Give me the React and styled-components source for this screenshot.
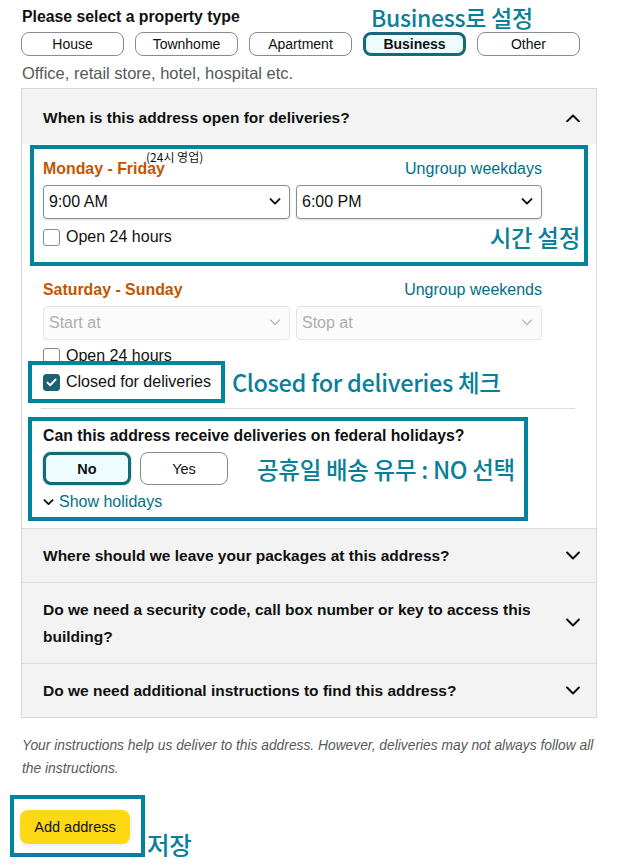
import React from "react";
import styled, { createGlobalStyle } from "styled-components";

const TEAL = "#00849e";
const NOTE = "#0a7f98";
const SELECTED = "#17697a";

const GlobalStyle = createGlobalStyle`
  body {
    margin: 0;
    background: #fff;
    font-family: "Liberation Sans", Arial, sans-serif;
    color: #0f1111;
  }
`;

const Page = styled.div`
  width: 630px;
  box-sizing: border-box;
  padding-left: 21px;
`;

const TitleRow = styled.div`
  display: flex;
  align-items: center;
  height: 30px;
  margin-top: 2px;
`;

const Title = styled.div`
  width: 349px;
  flex: none;
  font-size: 15.8px;
  font-weight: bold;
  padding-left: 1px;
`;

const Note = styled.span`
  font-family: "Noto Sans CJK KR", sans-serif;
  font-size: ${(p) => p.$size || 23.5}px;
  font-weight: 500;
  color: ${NOTE};
  line-height: 26px;
  white-space: nowrap;
  letter-spacing: -0.3px;
`;

const PillRow = styled.div`
  display: flex;
  gap: 11px;
`;

const Pill = styled.div`
  width: 103px;
  height: 24px;
  box-sizing: border-box;
  border-radius: 8px;
  border: ${(p) => (p.$active ? `3px solid ${SELECTED}` : "1px solid #888c8c")};
  background: ${(p) => (p.$active ? "#edfdff" : "#fff")};
  font-weight: ${(p) => (p.$active ? "bold" : "normal")};
  font-size: 14px;
  display: flex;
  align-items: center;
  justify-content: center;
  color: #0f1111;
`;

const Hint = styled.div`
  margin-top: 7px;
  font-size: 16.5px;
  line-height: 20px;
  color: #565959;
  padding-left: 1px;
`;

const Panel = styled.div`
  margin-top: 5px;
  width: 576px;
  box-sizing: border-box;
  border: 1px solid #d5d9d9;
`;

const SectionHeader = styled.div`
  display: flex;
  align-items: center;
  justify-content: space-between;
  background: #f3f3f3;
  padding: ${(p) => (p.$first ? "15px 15px 13px 21px" : "13px 15px 13px 21px")};
  border-top: ${(p) => (p.$first ? "none" : "1px solid #dcdede")};
  font-size: 15.5px;
  font-weight: bold;
  line-height: 27px;
`;

const SectionText = styled.div`
  max-width: 505px;
`;

const Body = styled.div`
  padding: 1px 21px 7px 21px;
  background: #fff;
`;

const AnnotBox = styled.div`
  position: relative;
  box-sizing: border-box;
  border: 4px solid ${TEAL};
  background: #fff;
`;

const HoursBox = styled(AnnotBox)`
  margin-left: -13px;
  width: 558px;
  padding: 9px 4px 12px 9px;
`;

const DayHeader = styled.div`
  position: relative;
  width: 499px;
  display: flex;
  justify-content: space-between;
  line-height: 22px;
  font-size: 16px;
`;

const DayLabel = styled.span`
  color: #c45500;
  font-weight: bold;
  font-size: 15.9px;
`;

const LinkText = styled.span`
  color: #007185;
`;

const Tag = styled.span`
  position: absolute;
  left: 103px;
  top: -8px;
  font-family: "Noto Sans CJK KR", sans-serif;
  font-size: 12px;
  line-height: 14px;
  color: #111;
`;

const SelectRow = styled.div`
  display: grid;
  grid-template-columns: 247px 246px;
  gap: 6px;
  width: 499px;
  margin-top: 5px;
`;

const Select = styled.div`
  height: 34px;
  box-sizing: border-box;
  border: 1px solid ${(p) => (p.$disabled ? "#e3e6e6" : "#888c8c")};
  border-radius: 4px;
  background: ${(p) => (p.$disabled ? "#fbfbfb" : "#fff")};
  box-shadow: ${(p) => (p.$disabled ? "none" : "0 1px 2px rgba(15,17,17,0.15)")};
  color: ${(p) => (p.$disabled ? "#aab0b0" : "#0f1111")};
  display: flex;
  align-items: center;
  justify-content: space-between;
  padding: 0 8px 0 5px;
  font-size: 16px;
`;

const CheckRow = styled.div`
  display: flex;
  align-items: center;
  gap: 6px;
  font-size: 16px;
  line-height: 20px;
`;

const LastRow = styled.div`
  display: flex;
  align-items: center;
  justify-content: space-between;
  margin-top: 5px;
  height: 26px;
`;

const Box = styled.span`
  width: 17px;
  height: 17px;
  flex: none;
  box-sizing: border-box;
  border: 1px solid ${(p) => (p.$checked ? "#1d6270" : "#888c8c")};
  border-radius: 3px;
  background: ${(p) => (p.$checked ? "#1d6270" : "#fff")};
  display: flex;
  align-items: center;
  justify-content: center;
`;

const Weekend = styled.div`
  margin-top: 13px;
`;

const WeekendCheck = styled(CheckRow)`
  margin-top: 6px;
`;

const ClosedRow = styled.div`
  position: relative;
  display: flex;
  align-items: center;
  gap: 7px;
  margin: -5px 0 0 -15px;
`;

const ClosedBox = styled(AnnotBox)`
  padding: 7px 10px 7px 11px;
`;

const Divider = styled.div`
  height: 1px;
  width: 534px;
  background: #dcdede;
  margin: 5px 0 0 -2px;
`;

const HolidayBox = styled(AnnotBox)`
  margin: 8px 0 0 -15px;
  width: 500px;
  padding: 5px 8px 5px 11px;
`;

const Question = styled.div`
  font-size: 15.8px;
  font-weight: bold;
  line-height: 20px;
`;

const ToggleRow = styled.div`
  display: flex;
  align-items: center;
  gap: 9px;
  margin-top: 6px;
`;

const Toggle = styled.div`
  width: 88px;
  height: 33px;
  box-sizing: border-box;
  border-radius: 8px;
  border: ${(p) => (p.$active ? `3px solid ${SELECTED}` : "1px solid #888c8c")};
  background: ${(p) => (p.$active ? "#edfdff" : "#fff")};
  font-weight: ${(p) => (p.$active ? "bold" : "normal")};
  font-size: 14.5px;
  display: flex;
  align-items: center;
  justify-content: center;
  box-shadow: ${(p) => (p.$active ? "0 0 2px rgba(11,110,130,0.6)" : "none")};
`;

const ToggleNote = styled(Note)`
  margin-left: 20px;
`;

const ShowRow = styled.div`
  display: flex;
  align-items: center;
  gap: 5px;
  margin-top: 7px;
  font-size: 16px;
  line-height: 20px;
  color: #007185;
`;

const FinePrint = styled.div`
  margin-top: 16px;
  width: 580px;
  font-size: 13.8px;
  font-style: italic;
  line-height: 23px;
  color: #565959;
  padding-left: 1px;
`;

const SaveRow = styled.div`
  display: flex;
  align-items: flex-end;
  margin: 15px 0 0 -11px;
`;

const SaveBox = styled(AnnotBox)`
  padding: 11px 11px 9px 6px;
`;

const AddButton = styled.div`
  width: 110px;
  height: 34px;
  border-radius: 8px;
  background: #ffd814;
  box-shadow: 0 2px 5px rgba(213, 217, 217, 0.5);
  font-size: 14.5px;
  display: flex;
  align-items: center;
  justify-content: center;
`;

const SaveNote = styled(Note)`
  font-size: 24.5px;
  margin-left: 2px;
  line-height: 24px;
`;

const Chevron = ({ up, size = 16, color = "#0f1111", stroke = 2 }) => (
  <svg width={size} height={size * 0.62} viewBox="0 0 16 10" fill="none">
    <path
      d={up ? "M2 8.5 L8 2.5 L14 8.5" : "M2 1.5 L8 7.5 L14 1.5"}
      stroke={color}
      strokeWidth={stroke}
      strokeLinecap="round"
      strokeLinejoin="round"
    />
  </svg>
);

const Check = ({ checked }) => (
  <Box $checked={checked}>
    {checked && (
      <svg width="11" height="9" viewBox="0 0 11 9" fill="none">
        <path d="M1.5 4.6 L4.2 7.2 L9.5 1.6" stroke="#fff" strokeWidth="2" strokeLinecap="round" strokeLinejoin="round" />
      </svg>
    )}
  </Box>
);

const Dropdown = ({ value, disabled }) => (
  <Select $disabled={disabled}>
    <span>{value}</span>
    <Chevron size={12} stroke={disabled ? 1.6 : 2.6} color={disabled ? "#aab0b0" : "#0f1111"} />
  </Select>
);

const types = ["House", "Townhome", "Apartment", "Business", "Other"];

const collapsed = [
  "Where should we leave your packages at this address?",
  "Do we need a security code, call box number or key to access this building?",
  "Do we need additional instructions to find this address?",
];

const App = () => {
  return (
    <Page>
      <GlobalStyle />
      <TitleRow>
        <Title>Please select a property type</Title>
        <Note $size={23}>Business로 설정</Note>
      </TitleRow>
      <PillRow>
        {types.map((t) => (
          <Pill key={t} $active={t === "Business"}>
            {t}
          </Pill>
        ))}
      </PillRow>
      <Hint>Office, retail store, hotel, hospital etc.</Hint>

      <Panel>
        <SectionHeader $first>
          <SectionText>When is this address open for deliveries?</SectionText>
          <Chevron up />
        </SectionHeader>
        <Body>
          <HoursBox>
            <DayHeader>
              <DayLabel>Monday - Friday</DayLabel>
              <Tag>(24시 영업)</Tag>
              <LinkText>Ungroup weekdays</LinkText>
            </DayHeader>
            <SelectRow>
              <Dropdown value="9:00 AM" />
              <Dropdown value="6:00 PM" />
            </SelectRow>
            <LastRow>
              <CheckRow>
                <Check />
                <span>Open 24 hours</span>
              </CheckRow>
              <Note>시간 설정</Note>
            </LastRow>
          </HoursBox>

          <Weekend>
            <DayHeader>
              <DayLabel>Saturday - Sunday</DayLabel>
              <LinkText>Ungroup weekends</LinkText>
            </DayHeader>
            <SelectRow>
              <Dropdown value="Start at" disabled />
              <Dropdown value="Stop at" disabled />
            </SelectRow>
            <WeekendCheck>
              <Check />
              <span>Open 24 hours</span>
            </WeekendCheck>
          </Weekend>

          <ClosedRow>
            <ClosedBox>
              <CheckRow>
                <Check checked />
                <span>Closed for deliveries</span>
              </CheckRow>
            </ClosedBox>
            <Note>Closed for deliveries 체크</Note>
          </ClosedRow>

          <Divider />

          <HolidayBox>
            <Question>Can this address receive deliveries on federal holidays?</Question>
            <ToggleRow>
              <Toggle $active>No</Toggle>
              <Toggle>Yes</Toggle>
              <ToggleNote>공휴일 배송 유무 : NO 선택</ToggleNote>
            </ToggleRow>
            <ShowRow>
              <Chevron size={11} stroke={2.6} />
              <span>Show holidays</span>
            </ShowRow>
          </HolidayBox>
        </Body>

        {collapsed.map((q) => (
          <SectionHeader key={q}>
            <SectionText>{q}</SectionText>
            <Chevron />
          </SectionHeader>
        ))}
      </Panel>

      <FinePrint>
        Your instructions help us deliver to this address. However, deliveries may not always follow all the
        instructions.
      </FinePrint>

      <SaveRow>
        <SaveBox>
          <AddButton>Add address</AddButton>
        </SaveBox>
        <SaveNote>저장</SaveNote>
      </SaveRow>
    </Page>
  );
};

export default App;
